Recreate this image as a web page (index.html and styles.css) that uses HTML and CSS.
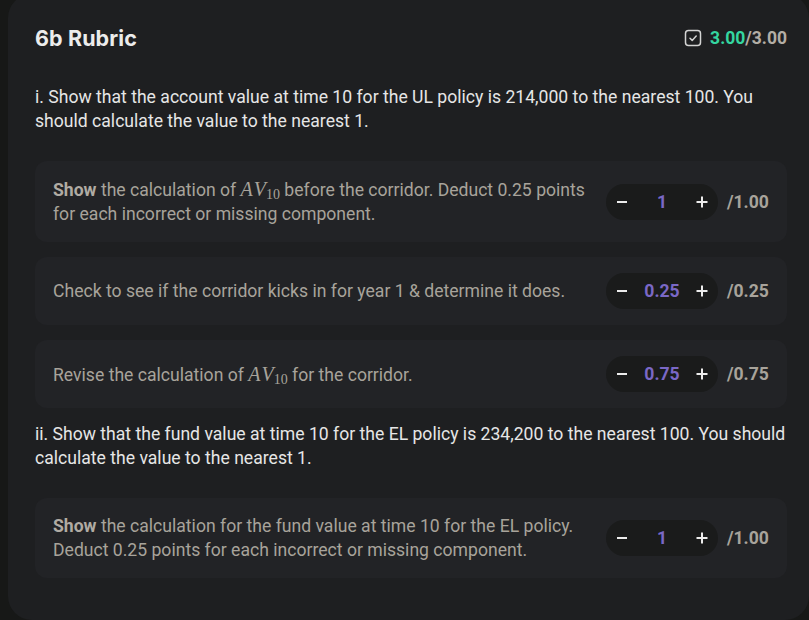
FILE: index.html
```html
<!DOCTYPE html>
<html lang="en">
<head>
<meta charset="utf-8">
<title>6b Rubric</title>
<link rel="stylesheet" href="styles.css">
</head>
<body>
<div class="card">
  <header class="head">
    <h2 class="title">6b Rubric</h2>
    <div class="score">
      <svg class="check" width="18" height="18" viewBox="0 0 18 18" fill="none"><rect x="1.5" y="1.5" width="15" height="15" rx="3" stroke="#d4d4d4" stroke-width="1.5"/><path d="M6 9.3l2.2 2.1 4-4.3" stroke="#d4d4d4" stroke-width="1.5" stroke-linecap="round" stroke-linejoin="round"/></svg>
      <span class="got">3.00</span><span class="total">/3.00</span>
    </div>
  </header>

  <section class="part">
    <p class="q">i. Show that the account value at time 10 for the UL policy is 214,000 to the nearest 100. You should calculate the value to the nearest 1.</p>
    <div class="items">
      <div class="item">
        <p class="crit"><b>Show</b> the calculation of <span class="math"><i>AV</i><sub>10</sub></span> before the corridor. Deduct 0.25 points for each incorrect or missing component.</p>
        <div class="grade">
          <div class="stepper">
            <button class="btn"><svg width="12" height="12" viewBox="0 0 12 12"><path d="M1 6h10" stroke="#ececec" stroke-width="2"/></svg></button>
            <span class="val">1</span>
            <button class="btn"><svg width="12" height="12" viewBox="0 0 12 12"><path d="M0.5 6h11M6 0.5v11" stroke="#ececec" stroke-width="2"/></svg></button>
          </div>
          <span class="max">/1.00</span>
        </div>
      </div>
      <div class="item">
        <p class="crit">Check to see if the corridor kicks in for year 1 &amp; determine it does.</p>
        <div class="grade">
          <div class="stepper">
            <button class="btn"><svg width="12" height="12" viewBox="0 0 12 12"><path d="M1 6h10" stroke="#ececec" stroke-width="2"/></svg></button>
            <span class="val">0.25</span>
            <button class="btn"><svg width="12" height="12" viewBox="0 0 12 12"><path d="M0.5 6h11M6 0.5v11" stroke="#ececec" stroke-width="2"/></svg></button>
          </div>
          <span class="max">/0.25</span>
        </div>
      </div>
      <div class="item">
        <p class="crit">Revise the calculation of <span class="math"><i>AV</i><sub>10</sub></span> for the corridor.</p>
        <div class="grade">
          <div class="stepper">
            <button class="btn"><svg width="12" height="12" viewBox="0 0 12 12"><path d="M1 6h10" stroke="#ececec" stroke-width="2"/></svg></button>
            <span class="val">0.75</span>
            <button class="btn"><svg width="12" height="12" viewBox="0 0 12 12"><path d="M0.5 6h11M6 0.5v11" stroke="#ececec" stroke-width="2"/></svg></button>
          </div>
          <span class="max">/0.75</span>
        </div>
      </div>
    </div>
  </section>

  <section class="part">
    <p class="q">ii. Show that the fund value at time 10 for the EL policy is 234,200 to the nearest 100. You should calculate the value to the nearest 1.</p>
    <div class="items">
      <div class="item">
        <p class="crit"><b>Show</b> the calculation for the fund value at time 10 for the EL policy. Deduct 0.25 points for each incorrect or missing component.</p>
        <div class="grade">
          <div class="stepper">
            <button class="btn"><svg width="12" height="12" viewBox="0 0 12 12"><path d="M1 6h10" stroke="#ececec" stroke-width="2"/></svg></button>
            <span class="val">1</span>
            <button class="btn"><svg width="12" height="12" viewBox="0 0 12 12"><path d="M0.5 6h11M6 0.5v11" stroke="#ececec" stroke-width="2"/></svg></button>
          </div>
          <span class="max">/1.00</span>
        </div>
      </div>
    </div>
  </section>
</div>
</body>
</html>
```
FILE: styles.css
```css
html, body {
  margin: 0;
  padding: 0;
  background: #171817;
  overflow: hidden;
}
body {
  font-family: Roboto, "Liberation Sans", sans-serif;
  font-size: 17.6px;
  line-height: 24px;
}
.card {
  margin: -6px 0 0 8px;
  height: 626px;
  box-sizing: border-box;
  background: #1e1f21;
  border-radius: 24px;
  padding: 28px 22px 40px 27px;
  display: flex;
  flex-direction: column;
  gap: 14px;
}
.head {
  display: flex;
  align-items: center;
  justify-content: space-between;
  height: 32px;
  margin-bottom: 17px;
}
.title {
  margin: 0;
  font-family: Inter, "Open Sans", sans-serif;
  font-weight: 700;
  font-size: 21.5px;
  color: #ececec;
  letter-spacing: 0.1px;
}
.score {
  display: flex;
  align-items: center;
  gap: 8px;
  font-weight: 700;
  font-size: 17.5px;
}
.got { color: #34d6a0; }
.total { color: #b3ada5; margin-left: -8px; }
.part {
  display: flex;
  flex-direction: column;
}
.q {
  margin: 0 0 28px;
  color: #e6e6e6;
}
.items {
  display: flex;
  flex-direction: column;
  gap: 15px;
}
.item {
  display: flex;
  align-items: center;
  gap: 12px;
  background: #222326;
  border-radius: 12px;
  padding: 16px 18px;
}
.crit {
  margin: 0;
  flex: 1;
  color: #a8a39b;
}
.crit b {
  font-weight: 700;
  color: #b0aba3;
}
.math {
  font-family: "Liberation Serif", "DejaVu Serif", serif;
  color: #a8a39b;
}
.math i {
  font-size: 20px;
  letter-spacing: 2px;
}
.math sub {
  font-size: 14px;
  line-height: 0;
  vertical-align: -3px;
  margin-left: -2px;
}
.grade {
  display: flex;
  align-items: center;
  gap: 9px;
}
.stepper {
  display: flex;
  align-items: center;
  height: 36px;
  width: 112px;
  border-radius: 18px;
  background: #1a1b1b;
}
.btn {
  width: 32px;
  height: 36px;
  padding: 0;
  border: 0;
  background: none;
  display: flex;
  align-items: center;
  justify-content: center;
}
.val {
  flex: 1;
  text-align: center;
  color: #7a68c6;
  font-weight: 700;
}
.max {
  color: #a8a39b;
  font-weight: 700;
  width: 42px;
}
```
